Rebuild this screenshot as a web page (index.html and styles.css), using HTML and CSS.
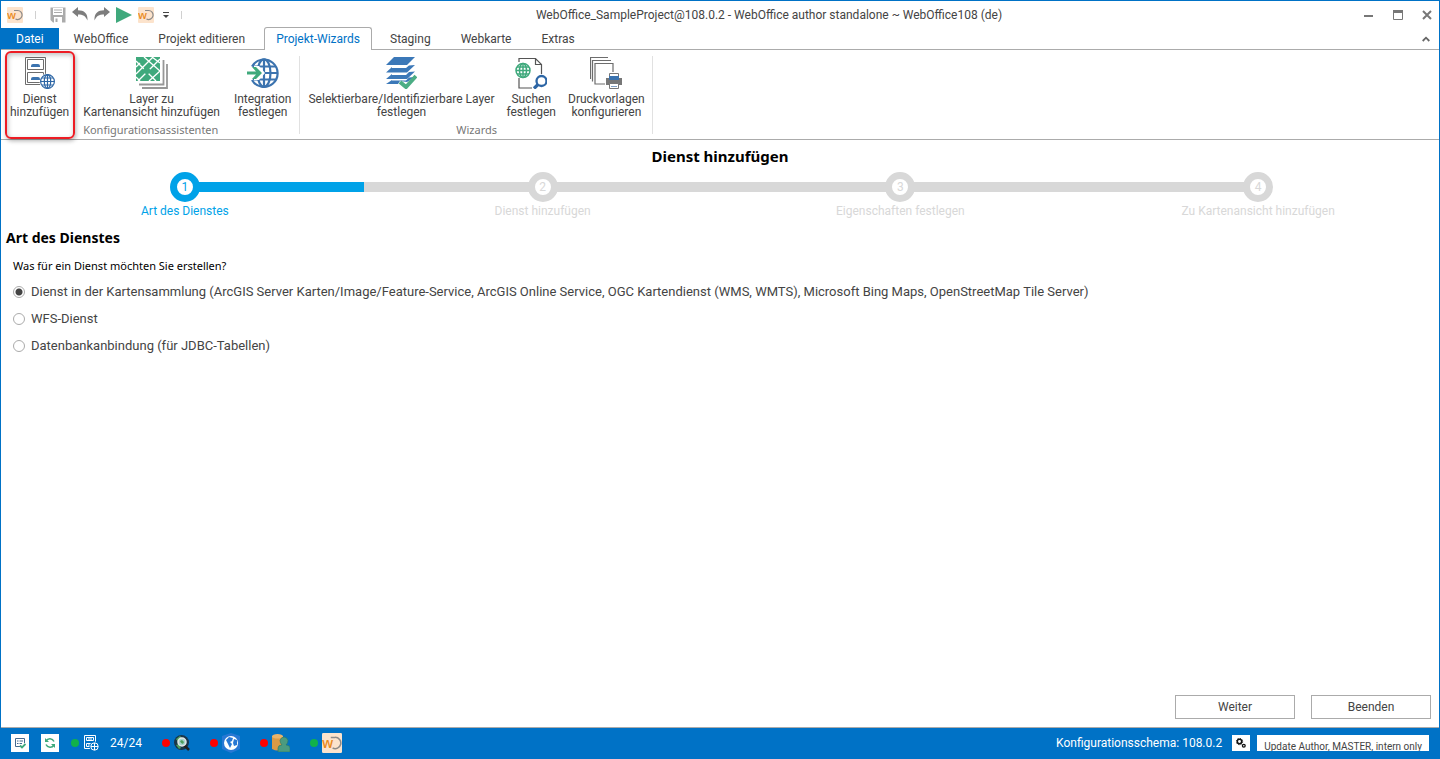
FILE: index.html
```html
<!DOCTYPE html>
<html lang="de">

<head>
    <meta charset="UTF-8">
    <meta name="viewport" content="width=device-width, initial-scale=1.0">
    <title>WebOffice author standalone</title>
    <link rel="stylesheet" href="styles.css">
</head>

<body>
    <!-- Logo, mehrfach verwendet -->
    <svg class="defs" aria-hidden="true">
        <symbol id="logo" viewBox="0 0 16 16">
            <rect width="16" height="16" rx="1" fill="#fce3cc"/>
            <path d="M7 3.500h3.500a4.500 4.500 0 1 1-2 8.500" fill="none" stroke="#8d8a88" stroke-width="1.200"/>
            <text x="0" y="12" class="logo-text">w</text>
        </symbol>
    </svg>

    <header class="titlebar">
        <div class="quick-access">
            <svg class="logo" width="16" height="16"><use href="#logo"/></svg>
            <span class="separator"></span>
            <button type="button" aria-label="Speichern">
                <svg width="16" height="16" viewBox="0 0 16 16"><path d="M.5.5h15v15H3L.5 13z" fill="#ababab"/><path d="M3 1h10v7H3zM4 10h8v6H4z" fill="#fff"/><path d="M4 3h8M4 5.5h8" stroke="#ababab"/><path d="M5.5 11.5h2V15h-2z" fill="#ababab"/></svg>
            </button>
            <button type="button" aria-label="Rückgängig">
                <svg width="16" height="16" viewBox="0 0 16 16"><path d="M0 5l6-5v3.200c6 0 10 3 9.500 10.300C13.500 9 11 7.500 6 7.500V10z" fill="#7d7d7d"/></svg>
            </button>
            <button type="button" aria-label="Wiederholen">
                <svg width="16" height="16" viewBox="0 0 16 16"><path d="M16 5l-6-5v3.200C4 3.200 0 6.200.5 13.500 2.500 9 5 7.500 10 7.500V10z" fill="#7d7d7d"/></svg>
            </button>
            <button type="button" aria-label="Starten">
                <svg width="16" height="16" viewBox="0 0 16 16"><path d="M0 0l16 8-16 8z" fill="#3fa97c"/></svg>
            </button>
            <button type="button" class="logo" aria-label="WebOffice">
                <svg width="16" height="16"><use href="#logo"/></svg>
            </button>
            <button type="button" class="more" aria-label="Anpassen">
                <svg width="6" height="8" viewBox="0 0 6 8"><path d="M0 1.500h6" stroke="#444"/><path d="M0 4h6L3 7z" fill="#444"/></svg>
            </button>
            <span class="separator"></span>
        </div>
        <div class="window-title">WebOffice_SampleProject@108.0.2 - WebOffice author standalone ~ WebOffice108 (de)</div>
        <div class="window-buttons">
            <button type="button" aria-label="Minimieren">
                <svg width="10" height="10" viewBox="0 0 10 10"><path d="M0 6h9" stroke="#777" stroke-width="2"/></svg>
            </button>
            <button type="button" aria-label="Maximieren">
                <svg width="10" height="10" viewBox="0 0 10 10"><path d="M.5.5h9v9h-9z" fill="#fff" stroke="#777"/><path d="M0 0h10v3H0z" fill="#777"/></svg>
            </button>
            <button type="button" aria-label="Schließen">
                <svg width="10" height="10" viewBox="0 0 10 10"><path d="M1 1l8 8M9 1l-8 8" stroke="#777" stroke-width="2"/></svg>
            </button>
        </div>
    </header>

    <nav class="tabs">
        <a href="#" class="tab file">Datei</a>
        <a href="#" class="tab">WebOffice</a>
        <a href="#" class="tab">Projekt editieren</a>
        <a href="#" class="tab active">Projekt-Wizards</a>
        <a href="#" class="tab">Staging</a>
        <a href="#" class="tab">Webkarte</a>
        <a href="#" class="tab">Extras</a>
        <button type="button" class="collapse" aria-label="Menüband reduzieren">
            <svg width="8" height="6" viewBox="0 0 8 6"><path d="M.7 5L4 1.700 7.300 5" fill="none" stroke="#666" stroke-width="1.800"/></svg>
        </button>
    </nav>

    <div class="ribbon">
        <section class="group">
            <div class="group-buttons">
                <button type="button" class="tool highlight">
                    <svg width="32" height="32" viewBox="0 0 32 32">
                        <path d="M1.500.5h20v27h-20zM3.500 2.500h16v10h-16zM3.500 15.500h16v10h-16z" fill="#fff" stroke="#6d6d6d"/>
                        <path d="M7 10V9q0-2 2-2h5q2 0 2 2v1zM7 23v-1q0-2 2-2h5q2 0 2 2v1z" fill="#3b73af"/>
                        <circle cx="23.500" cy="24.500" r="8" fill="#fff"/>
                        <g fill="none" stroke="#2d66a5" stroke-width="1.200"><circle cx="23.500" cy="24.500" r="6.900"/><ellipse cx="23.500" cy="24.500" rx="3.200" ry="6.900"/><path d="M23.500 18v13M17 24.500h13M18 21h11M18 28h11"/></g>
                    </svg>
                    <span>Dienst<br>hinzufügen</span>
                </button>
                <button type="button" class="tool">
                    <svg width="32" height="32" viewBox="0 0 32 32">
                        <path d="M27.500 3v24.500H3M31 7v24H6" fill="none" stroke="#979797" stroke-width="1.800"/>
                        <path d="M0 0h24v24H0z" fill="#3fa97c"/>
                        <path d="M0 4l20 20M8 0l16 14M0 17L17 0M24 2L2 24M0 10l4-4M13 24l11-10M16 0l8 6M0 20l4 4" stroke="#fff" stroke-width="1.300"/>
                        <path d="M10 9l6 5-5 4-5-4z" fill="#3fa97c"/>
                    </svg>
                    <span>Layer zu<br>Kartenansicht hinzufügen</span>
                </button>
                <button type="button" class="tool">
                    <svg width="32" height="32" viewBox="0 0 32 32">
                        <g fill="none" stroke="#3b73af" stroke-width="2.200"><path d="M5 9.500a13.700 13.700 0 1 1 0 13.500"/><ellipse cx="17" cy="16" rx="6.500" ry="13.700"/><path d="M17 2v28M6 9.500h23M6 22.500h23M17 16h14"/></g>
                        <path d="M0 13h7V9h5l6 7-6 7H7v-4H0z" fill="#fff"/>
                        <path d="M0 14.500h9L5 10h4l6 6-6 6H5l4-4.500H0z" fill="#3fa97c"/>
                    </svg>
                    <span>Integration<br>festlegen</span>
                </button>
            </div>
            <div class="group-label">Konfigurationsassistenten</div>
        </section>
        <section class="group wizards">
            <div class="group-buttons">
                <button type="button" class="tool">
                    <svg width="32" height="32" viewBox="0 0 32 32">
                        <path d="M9 0h21l-8 8H1zM7 10l-6 5.500h21L30 8l-6 .5-3 2.500H7zM7 17l-6 5h21l8-7.500-6 .5-3 3H7zM7 23l-6 4h12l2-3 7 1 8-5-6 .5-3 3H7z" fill="#3b78b8"/>
                        <path d="M15 25l6 5L31 19" fill="none" stroke="#4cad84" stroke-width="4"/>
                    </svg>
                    <span>Selektierbare/Identifizierbare Layer<br>festlegen</span>
                </button>
                <button type="button" class="tool">
                    <svg width="32" height="32" viewBox="0 0 32 32">
                        <path d="M4 5V1.500h16.500l6 6V17M4 21v10h13M20.500 1.500v6h6" fill="none" stroke="#555" stroke-width="1.200"/>
                        <g fill="#fff" stroke="#3fa97c" stroke-width="1.500"><circle cx="8" cy="13.500" r="7"/><ellipse cx="8" cy="13.500" rx="3.500" ry="7"/><path d="M8 6.500v14M1 13.500h14M2 10h12M2 17h12"/></g>
                        <circle cx="26.500" cy="24" r="5" fill="#fff" stroke="#2d66a5" stroke-width="2.300"/><path d="M23 27.500l-4 4" stroke="#2d66a5" stroke-width="3.200"/>
                    </svg>
                    <span>Suchen<br>festlegen</span>
                </button>
                <button type="button" class="tool">
                    <svg width="32" height="32" viewBox="0 0 32 32">
                        <g fill="none" stroke="#6d6d6d" stroke-width="1.200"><path d="M.5 22V.5H18M2.500 24.500v-21H21"/><path d="M15 27H5V6.500h18V15"/></g>
                        <path d="M16 21h16v7H16z" fill="#777"/><path d="M19.500 16.500h9v5h-9zM19.500 26.500h9v5h-9z" fill="#fff" stroke="#777"/><path d="M19 19h10v4H19z" fill="#3b73af"/><path d="M21 29.500h6" stroke="#7f9fc5"/>
                    </svg>
                    <span>Druckvorlagen<br>konfigurieren</span>
                </button>
            </div>
            <div class="group-label">Wizards</div>
        </section>
    </div>

    <main class="wizard">
        <h1>Dienst hinzufügen</h1>
        <ol class="steps">
            <li class="step current"><span class="track"><b>1</b></span>Art des Dienstes</li>
            <li class="step"><span class="track"><b>2</b></span>Dienst hinzufügen</li>
            <li class="step"><span class="track"><b>3</b></span>Eigenschaften festlegen</li>
            <li class="step"><span class="track"><b>4</b></span>Zu Kartenansicht hinzufügen</li>
        </ol>
        <h2>Art des Dienstes</h2>
        <fieldset class="options">
            <legend>Was für ein Dienst möchten Sie erstellen?</legend>
            <label><input type="radio" name="dienst" checked>Dienst in der Kartensammlung (ArcGIS Server Karten/Image/Feature-Service, ArcGIS Online Service, OGC Kartendienst (WMS, WMTS), Microsoft Bing Maps, OpenStreetMap Tile Server)</label>
            <label><input type="radio" name="dienst">WFS-Dienst</label>
            <label><input type="radio" name="dienst">Datenbankanbindung (für JDBC-Tabellen)</label>
        </fieldset>
        <div class="actions">
            <button type="button">Weiter</button>
            <button type="button">Beenden</button>
        </div>
    </main>

    <footer class="statusbar">
        <button type="button" class="status-button" aria-label="Projekt prüfen">
            <svg width="12" height="12" viewBox="0 0 12 12"><path d="M10.500 6V1.500h-9v8H6" fill="none" stroke="#44698f"/><path d="M3 4h1.500M5.500 4H9M3 6.500h1.500M5.500 6.500H8" stroke="#44698f"/><path d="M6 8.500l2 2L11.500 7" fill="none" stroke="#3fa97c" stroke-width="1.800"/></svg>
        </button>
        <button type="button" class="status-button" aria-label="Aktualisieren">
            <svg width="12" height="12" viewBox="0 0 12 12"><path d="M10 4.500A4.500 4.500 0 0 0 2 4M2 7.500A4.500 4.500 0 0 0 10 8" fill="none" stroke="#3fa97c" stroke-width="1.500"/><path d="M1 1v4h4zM11 11V7H7z" fill="#3fa97c"/></svg>
        </button>
        <div class="status">
            <span class="dot ok"></span>
            <svg width="16" height="16" viewBox="0 0 16 16"><path d="M1.500.5h11v13h-11zM3.500 2.500h7v3h-7zM3.500 8.500h7v3h-7z" fill="none" stroke="#fff"/><path d="M5 4h4M5 10h3" stroke="#fff"/><circle cx="11.500" cy="11.500" r="5" fill="#0072c6"/><g fill="none" stroke="#fff"><circle cx="11.500" cy="11.500" r="3.700"/><path d="M11.500 8v7M8 11.500h7"/></g></svg>
            <span class="count">24/24</span>
        </div>
        <div class="status">
            <span class="dot"></span>
            <svg width="16" height="16" viewBox="0 0 16 16"><circle cx="7.500" cy="7.500" r="7.500" fill="#19364a"/><path d="M2 4l4-3 2 2-4 4zM2 10l3-1 2 4-2 1z" fill="#4e9e5d"/><path d="M10 10l5 5" stroke="#222" stroke-width="2.500"/><circle cx="8" cy="7" r="4" fill="#a6d3cd" stroke="#e4e8e8" stroke-width="1.500"/><path d="M6 6l2-1 2 2-1 2-2-1z" fill="#4e9e5d"/></svg>
        </div>
        <div class="status">
            <span class="dot"></span>
            <svg width="18" height="20" viewBox="0 0 18 20"><path d="M9 0l9 3v13l-9 4-9-4V3z" fill="#2878d4"/><circle cx="9" cy="10" r="7" fill="#fff"/><path d="M4 7l3-3 4 1-1 3-2 1 2 2-2 4-2-4zM12 6l3 1v5l-3 1-1-3z" fill="#2878d4"/></svg>
        </div>
        <div class="status">
            <span class="dot"></span>
            <svg width="18" height="18" viewBox="0 0 18 18"><path d="M0 2v13q6 3 11 0V2z" fill="#d99a46"/><ellipse cx="5.500" cy="2.300" rx="5.500" ry="2.300" fill="#e8b36b"/><path d="M6 18v-4q0-3 4-3-2-2-2-4.500Q9 3 12 3t4 3.500Q16 9 14 11q4 0 4 3v4z" fill="#4b9b80" stroke="#287764" stroke-width=".6"/></svg>
        </div>
        <div class="status">
            <span class="dot ok"></span>
            <svg class="logo" width="20" height="20"><use href="#logo"/></svg>
        </div>
        <span class="schema">Konfigurationsschema: 108.0.2</span>
        <button type="button" class="status-button settings" aria-label="Einstellungen">
            <svg width="10" height="10" viewBox="0 0 10 10"><circle cx="3.500" cy="3.500" r="2.200" fill="none" stroke="#111" stroke-width="1.500"/><circle cx="3.500" cy="3.500" r="3.200" fill="none" stroke="#111" stroke-dasharray="1.200 1.300"/><circle cx="7.800" cy="7.800" r="1.400" fill="none" stroke="#111" stroke-width="1.300"/></svg>
        </button>
        <div class="message">Update Author, MASTER, intern only</div>
    </footer>
</body>

</html>
```
FILE: styles.css
```css
/* Reset */
* {
    margin: 0;
    padding: 0;
    box-sizing: border-box;
}

body {
    display: flex;
    flex-direction: column;
    min-height: 100vh;
    border: 1px solid #0072c6;
    border-bottom: none;
    background: #fff;
    color: #444;
    font-family: Roboto, 'Noto Sans', sans-serif;
    font-size: 12px;
    line-height: 16px;
}

button {
    border: none;
    background: none;
    color: inherit;
    font: inherit;
    cursor: pointer;
}

svg {
    display: block;
    flex: none;
}

.defs {
    position: absolute;
    width: 0;
    height: 0;
}

.logo-text {
    fill: #e98a1d;
    font-family: 'Open Sans', sans-serif;
    font-size: 11px;
    font-weight: 600;
}

/* Titelleiste */
.titlebar {
    display: flex;
    align-items: center;
    height: 27px;
    padding: 0 7px 0 6px;
}

.quick-access {
    display: flex;
    align-items: center;
    gap: 6px;
}

.separator {
    width: 1px;
    height: 8px;
    margin: 0 8px 0 6px;
    background: #d0d0d0;
}

.more {
    margin: 0 0 0 3px;
}

.window-title {
    flex: 1;
    padding-right: 16px;
    text-align: center;
}

.window-buttons {
    display: flex;
    gap: 19px;
}

/* Register */
.tabs {
    display: flex;
    height: 22px;
    border-bottom: 1px solid #ababab;
}

.tab {
    padding: 3px 15px 0;
    color: #444;
    text-decoration: none;
    white-space: nowrap;
}

.tab.file {
    background: #0072c6;
    color: #fff;
}

.tab.active {
    height: 23px;
    margin: -1px 3px 0 4px;
    padding: 3px 11px 0;
    border: 1px solid #ababab;
    border-bottom: none;
    border-radius: 3px 3px 0 0;
    background: #fff;
    color: #0072c6;
}

.collapse {
    margin-left: auto;
    padding: 0 9px;
}

/* Menüband */
.ribbon {
    display: flex;
    height: 90px;
    border-bottom: 1px solid #ababab;
}

.group {
    position: relative;
    display: flex;
    flex-direction: column;
    justify-content: space-between;
    padding: 7px 2px 1px;
}

.group::after {
    content: "";
    position: absolute;
    top: 6px;
    right: 0;
    bottom: 5px;
    width: 1px;
    background: #e1e1e1;
}

.group-buttons {
    display: flex;
}

.tool {
    position: relative;
    display: flex;
    flex-direction: column;
    align-items: center;
    gap: 4px;
    padding: 0 7px;
    line-height: 13px;
    white-space: nowrap;
}

.wizards .tool {
    padding: 0 6px;
}

.tool.highlight::after {
    content: "";
    position: absolute;
    inset: -6px 1px -20px 2px;
    border: 2px solid #ed1c24;
    border-radius: 6px;
    box-shadow: 1px 2px 4px rgba(0, 0, 0, 0.3), inset 1px 2px 5px rgba(0, 0, 0, 0.25);
}

.group-label {
    color: #777;
    font-family: 'Noto Sans', sans-serif;
    font-size: 11px;
    text-align: center;
}

/* Assistent */
.wizard {
    display: flex;
    flex: 1;
    flex-direction: column;
    padding: 6px 5px 8px;
}

h1,
h2 {
    color: #000;
    font-family: 'Noto Sans', sans-serif;
    font-size: 15px;
    line-height: 20px;
}

h1 {
    text-align: center;
}

h2 {
    font-size: 14px;
}

.steps {
    display: flex;
    margin: 6px -3px 9px 0;
    color: #d8d8d8;
    list-style: none;
}

.step {
    flex: 1;
    text-align: center;
}

.track {
    display: flex;
    align-items: center;
    margin-bottom: 1px;
}

.track::before,
.track::after {
    content: "";
    flex: 1;
    height: 10px;
    margin: 0 -2px 0 0;
    background: #d8d8d8;
}

.track::after {
    margin: 0 0 0 -2px;
}

.track b {
    width: 30px;
    height: 30px;
    border: 7px solid #d8d8d8;
    border-radius: 50%;
    font-weight: normal;
}

.step:first-child .track::before,
.step:last-child .track::after {
    background: none;
}

.step.current {
    color: #00a2e8;
}

.step.current b {
    border-color: #00a2e8;
}

.step.current .track::after {
    background: #00a2e8;
}

.options {
    display: flex;
    flex-direction: column;
    gap: 9px;
    margin-top: 10px;
    padding: 0 7px;
    border: none;
}

.options legend {
    margin-bottom: 9px;
    color: #000;
    font-family: 'Noto Sans', sans-serif;
    font-size: 11px;
}

.options label {
    display: flex;
    align-items: center;
    gap: 6px;
    font-size: 13px;
    line-height: 18px;
}

.options input {
    appearance: none;
    flex: none;
    width: 12px;
    height: 12px;
    border: 1px solid #ababab;
    border-radius: 50%;
    background: #fff;
}

.options input:checked {
    background: radial-gradient(circle, #444 3px, #fff 4px);
}

.actions {
    display: flex;
    justify-content: flex-end;
    gap: 16px;
    margin-top: auto;
    padding-right: 3px;
}

.actions button {
    width: 120px;
    height: 24px;
    border: 1px solid #ababab;
}

/* Statusleiste */
.statusbar {
    display: flex;
    align-items: center;
    height: 32px;
    padding: 0 10px 2px;
    border-top: 1px solid #ababab;
    background: #0072c6;
    color: #fff;
}

.status-button {
    display: flex;
    align-items: center;
    justify-content: center;
    width: 18px;
    height: 18px;
    margin-right: 12px;
    background: #fff;
}

.status {
    display: flex;
    align-items: center;
    gap: 4px;
    margin-right: 20px;
}

.dot {
    width: 8px;
    height: 8px;
    border-radius: 50%;
    background: #f00;
}

.dot.ok {
    background: #11b24b;
}

.count {
    margin-left: 7px;
}

.schema {
    margin-left: auto;
}

.settings {
    height: 16px;
    margin: 0 7px 0 10px;
}

.message {
    height: 16px;
    padding: 4px 7px 0;
    overflow: hidden;
    background: #fff;
    color: #444;
    font-size: 10px;
    white-space: nowrap;
}
```
